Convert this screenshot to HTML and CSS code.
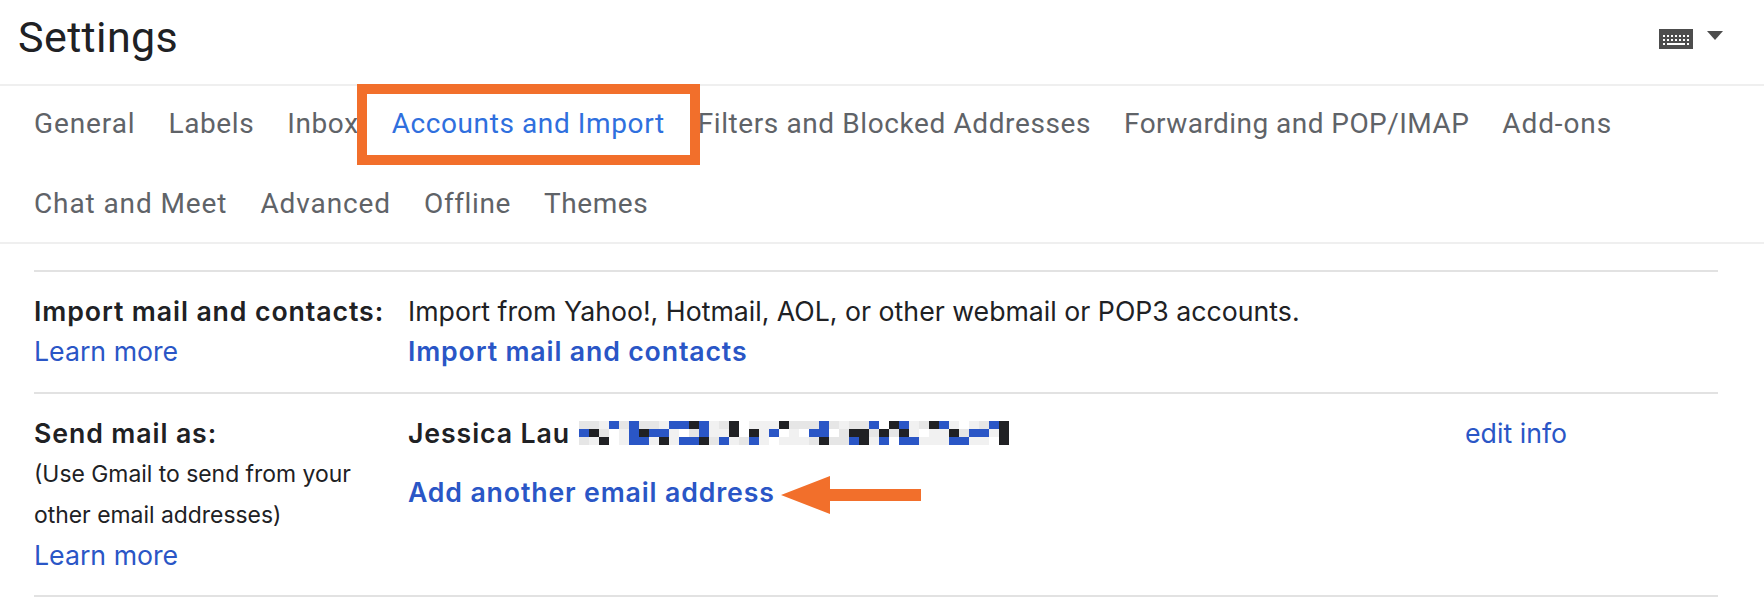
FILE: index.html
```html
<!DOCTYPE html>
<html lang="en">
<head>
  <meta charset="UTF-8">
  <title>Settings</title>
  <link rel="stylesheet" href="styles.css">
</head>
<body>
  <!-- Header -->
  <header class="header">
    <h1>Settings</h1>
    <div class="input-tools">
      <svg class="keyboard" width="34" height="20" viewBox="0 0 34 20">
        <rect width="34" height="20" fill="#4d4d4d"/>
        <path d="M4 6h2v2H4zM8 6h2v2H8zM12 6h2v2h-2zM16 6h2v2h-2zM20 6h2v2h-2zM24 6h2v2h-2zM28 6h2v2h-2zM4 10h2v2H4zM8 10h2v2H8zM12 10h2v2h-2zM16 10h2v2h-2zM20 10h2v2h-2zM24 10h2v2h-2zM28 10h2v2h-2zM4 14h2v2H4zM8 14h18v2H8zM28 14h2v2h-2z" fill="#fff"/>
      </svg>
      <span class="caret"></span>
    </div>
  </header>

  <!-- Tabs -->
  <nav class="tabs">
    <div class="tab-row">
      <a class="wide">General</a>
      <a>Labels</a>
      <a>Inbox</a>
      <a class="active">Accounts and Import</a>
      <a>Filters and Blocked Addresses</a>
      <a class="tight">Forwarding and POP/IMAP</a>
      <a class="wide">Add-ons</a>
    </div>
    <div class="tab-row">
      <a class="wide">Chat and Meet</a>
      <a class="wide">Advanced</a>
      <a>Offline</a>
      <a>Themes</a>
    </div>
  </nav>

  <!-- Settings rows -->
  <main class="content">
    <section class="row">
      <div class="label">
        <strong>Import mail and contacts:</strong>
        <a class="link">Learn more</a>
      </div>
      <div class="value">
        <p>Import from Yahoo!, Hotmail, AOL, or other webmail or POP3 accounts.</p>
        <a class="action">Import mail and contacts</a>
      </div>
    </section>
    <section class="row">
      <div class="label">
        <strong>Send mail as:</strong>
        <span class="note">(Use Gmail to send from your other email addresses)</span>
        <a class="link">Learn more</a>
      </div>
      <div class="value">
        <div class="sender"><strong>Jessica Lau</strong><span class="redacted" id="redacted"></span></div>
        <div class="add-row">
          <a class="action">Add another email address</a>
          <svg class="arrow" width="140" height="38" viewBox="0 0 140 38"><path d="M0 19 49 0v13h91v12H49v13z" fill="#f26f2b"/></svg>
        </div>
      </div>
      <a class="link edit">edit info</a>
    </section>
  </main>

  <script>
    // Pixelated block over the address, one letter per cell (see .redacted i.*)
    const rows = [
      "ggLbgbggLbbkbLgkwLLLkgggbgLggbwkbLgkbLwLgbk",
      "bkgwLbkbbLwgbLLkwkLbwLwbbwgkkgkgkLwLLkgbbLk",
      "gLkwLbbLkLbbkgbLgbLwLLLgkggbkLbwbbLLLbbLLwk"
    ];
    const box = document.getElementById("redacted");
    rows.forEach(row => {
      for (const c of row) {
        const cell = document.createElement("i");
        cell.className = c;
        box.appendChild(cell);
      }
    });
  </script>
</body>
</html>
```

FILE: styles.css
```css
* {
  box-sizing: border-box;
}
html, body {
  margin: 0;
  padding: 0;
}
body {
  width: 1764px;
  height: 608px;
  overflow: hidden;
  background-color: #fff;
  color: #202124;
  font-family: Inter, Roboto, Arial, sans-serif;
  font-size: 26.7px;
}
.header {
  height: 86px;
  padding: 0 0 0 18px;
  display: flex;
  align-items: center;
  justify-content: space-between;
  border-bottom: 2px solid #efefef;
}
h1 {
  margin: 0 0 11px;
  font-family: Roboto, Arial, sans-serif;
  font-size: 43px;
  font-weight: 400;
  letter-spacing: 0.4px;
}
.input-tools {
  display: flex;
  align-items: flex-start;
  gap: 14px;
  margin: 0 41px 6px 0;
}
.caret {
  width: 0;
  height: 0;
  margin-top: 2px;
  border-left: 8px solid transparent;
  border-right: 8px solid transparent;
  border-top: 9px solid #4d4d4d;
}
.tabs {
  height: 158px;
  padding: 0 0 0 34px;
  border-bottom: 2px solid #efefef;
}
.tab-row {
  display: flex;
  gap: 33px;
  height: 80px;
}
.tabs a {
  line-height: 76px;
  font-family: Roboto, Arial, sans-serif;
  font-size: 28px;
  letter-spacing: 0.6px;
  color: #5f6368;
}
.tabs a.wide {
  letter-spacing: 0.9px;
}
.tabs a.tight {
  letter-spacing: 0.45px;
}
.tabs a.active {
  position: relative;
  color: #2f6fde;
}
.tabs a.active::after {
  content: "";
  box-sizing: border-box;
  position: absolute;
  left: -35px;
  right: -35px;
  top: -2px;
  height: 81px;
  border: 10px solid #f26f2b;
}
.content {
  margin: 26px 46px 0 34px;
  border-top: 2px solid #e2e2e2;
}
.row {
  display: flex;
  padding: 19px 0 0;
  border-bottom: 2px solid #e2e2e2;
  height: 122px;
}
.row + .row {
  height: 203px;
}
.label {
  width: 374px;
  display: flex;
  flex-direction: column;
}
.label strong {
  line-height: 41px;
  font-weight: 600;
  letter-spacing: 0.9px;
}
.note {
  width: 340px;
  font-size: 22.9px;
  line-height: 41px;
}
.link {
  color: #2a56c6;
  line-height: 38px;
}
.value {
  flex: 1;
}
.value p {
  margin: 0;
  line-height: 41px;
}
.action {
  display: block;
  color: #2a56c6;
  font-weight: 600;
  letter-spacing: 0.85px;
  line-height: 38px;
}
.sender {
  display: flex;
  align-items: center;
  height: 40px;
}
.sender strong {
  font-weight: 600;
  letter-spacing: 0.9px;
}
.redacted {
  display: flex;
  flex-wrap: wrap;
  width: 430px;
  height: 25px;
  margin-left: 9px;
}
.redacted i {
  display: block;
  width: 10px;
  height: 8.33px;
}
.redacted .k { background: #202124; }
.redacted .b { background: #2a56c6; }
.redacted .g { background: #e6e6e6; }
.redacted .L { background: #f1f1f1; }
.redacted .w { background: #fff; }
.add-row {
  display: flex;
  align-items: flex-start;
  gap: 6px;
  margin-top: 20px;
}
.arrow {
  margin-top: 3px;
}
.edit {
  margin-right: 151px;
  padding-top: 1px;
}
```
